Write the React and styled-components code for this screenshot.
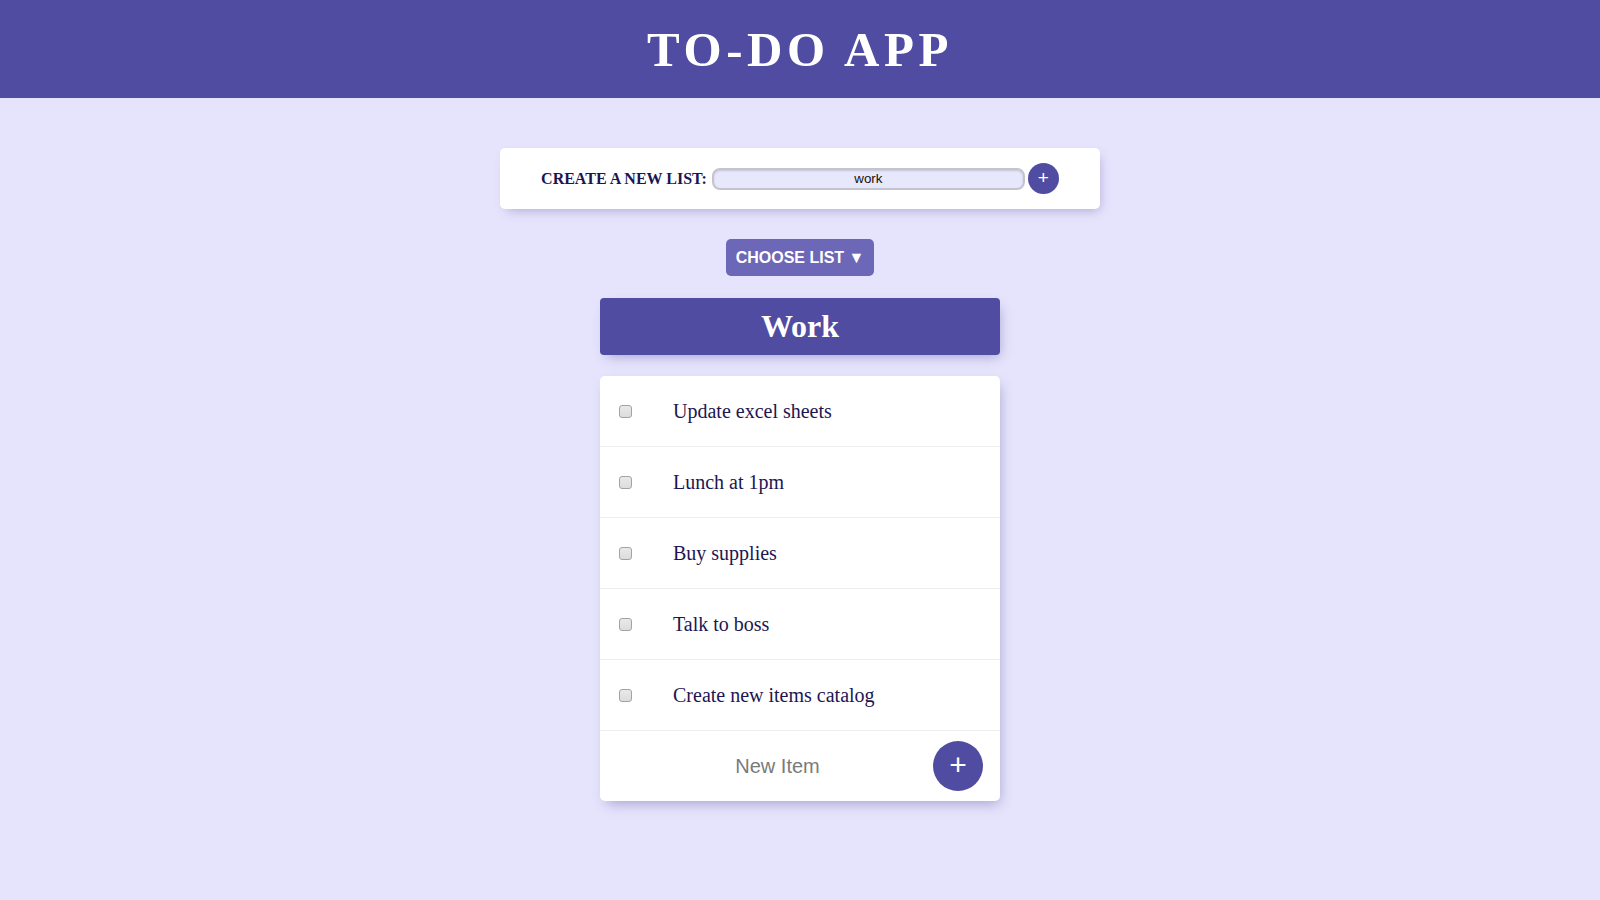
import styled, { createGlobalStyle } from "styled-components";

const items = [
  "Update excel sheets",
  "Lunch at 1pm",
  "Buy supplies",
  "Talk to boss",
  "Create new items catalog",
];

function App() {
  return (
    <>
      <GlobalStyle />
      <Header>
        <Title>TO-DO APP</Title>
      </Header>

      <Main>
        <CreateCard>
          <CreateLabel>CREATE A NEW LIST:</CreateLabel>
          <CreateInput defaultValue="work" />
          <SmallAdd>+</SmallAdd>
        </CreateCard>

        <ChooseButton>CHOOSE LIST ▼</ChooseButton>

        <ListHeading>Work</ListHeading>

        <ListCard>
          {items.map((item) => (
            <Row key={item}>
              <Check type="checkbox" />
              <ItemText>{item}</ItemText>
            </Row>
          ))}
          <NewRow>
            <NewInput placeholder="New Item" />
            <BigAdd>+</BigAdd>
          </NewRow>
        </ListCard>
      </Main>
    </>
  );
}

export default App;

const GlobalStyle = createGlobalStyle`
  body {
    margin: 0;
    background-color: #e6e4fc;
    font-family: "Liberation Serif", "Times New Roman", serif;
    min-height: 100vh;
  }
`;

const Header = styled.header`
  background-color: #4f4ca1;
  height: 98px;
  display: flex;
  align-items: center;
  justify-content: center;
`;

const Title = styled.h1`
  margin: 0;
  color: #fff;
  font-size: 49px;
  font-weight: bold;
  letter-spacing: 4.6px;
`;

const Main = styled.main`
  display: flex;
  flex-direction: column;
  align-items: center;
  padding-top: 50px;
`;

const CreateCard = styled.div`
  width: 600px;
  height: 61px;
  box-sizing: border-box;
  background: #fff;
  border-radius: 5px;
  box-shadow: 3px 5px 12px -4px rgba(60, 50, 140, 0.35);
  display: flex;
  align-items: center;
  justify-content: center;
`;

const CreateLabel = styled.label`
  font-size: 16px;
  font-weight: bold;
  color: #1c1650;
  margin-right: 5px;
`;

const CreateInput = styled.input`
  width: 313px;
  height: 22px;
  box-sizing: border-box;
  background: #e8e8fd;
  border: 2px solid #c4c4cf;
  border-radius: 8px;
  box-shadow: inset 0 1px 2px rgba(0, 0, 0, 0.15);
  text-align: center;
  font-family: "Liberation Sans", Arial, sans-serif;
  font-size: 13.33px;
  color: #111;
  outline: none;
`;

const SmallAdd = styled.button`
  width: 31px;
  height: 31px;
  margin-left: 3px;
  border: none;
  border-radius: 50%;
  background: #4f4ca1;
  color: #fff;
  font-family: "Liberation Sans", Arial, sans-serif;
  font-size: 19px;
  line-height: 1;
  padding: 0 0 3px;
`;

const ChooseButton = styled.button`
  margin-top: 30px;
  height: 37px;
  padding: 0 10px;
  border: none;
  border-radius: 5px;
  background: #6c68b7;
  color: #fff;
  font-family: "Liberation Sans", Arial, sans-serif;
  font-weight: bold;
  font-size: 16px;
`;

const ListHeading = styled.h1`
  margin: 22px 0 0;
  width: 400px;
  height: 57px;
  box-sizing: border-box;
  background: #4f4ca1;
  border-radius: 4px;
  box-shadow: 3px 5px 12px -4px rgba(60, 50, 140, 0.4);
  color: #fff;
  font-size: 32px;
  font-weight: bold;
  display: flex;
  align-items: center;
  justify-content: center;
`;

const ListCard = styled.div`
  margin-top: 21px;
  width: 400px;
  background: #fff;
  border-radius: 5px;
  box-shadow: 3px 6px 14px -4px rgba(60, 50, 140, 0.4);
  overflow: hidden;
`;

const Row = styled.div`
  height: 71px;
  box-sizing: border-box;
  display: flex;
  align-items: center;
  padding-left: 19px;
  border-bottom: 1px solid #eeeeee;
`;

const Check = styled.input`
  appearance: none;
  width: 13px;
  height: 13px;
  margin: 0;
  box-sizing: border-box;
  border: 1px solid #a3a3a3;
  border-radius: 3px;
  background: linear-gradient(#e9e9e9, #dcdcdc);
`;

const ItemText = styled.p`
  margin: 0 0 0 41px;
  font-size: 20px;
  color: #1d1652;
`;

const NewRow = styled.div`
  height: 70px;
  display: flex;
  align-items: center;
  padding-right: 17px;
`;

const NewInput = styled.input`
  flex: 1;
  min-width: 0;
  height: 50px;
  border: none;
  outline: none;
  padding: 0 0 0 22px;
  text-align: center;
  font-family: "Liberation Sans", Arial, sans-serif;
  font-size: 20px;
  &::placeholder {
    color: #7a7a7a;
  }
`;

const BigAdd = styled.button`
  width: 50px;
  height: 50px;
  border: none;
  border-radius: 50%;
  background: #4f4ca1;
  color: #fff;
  font-family: "Liberation Sans", Arial, sans-serif;
  font-size: 30px;
  line-height: 1;
  padding: 0 0 3px;
`;
